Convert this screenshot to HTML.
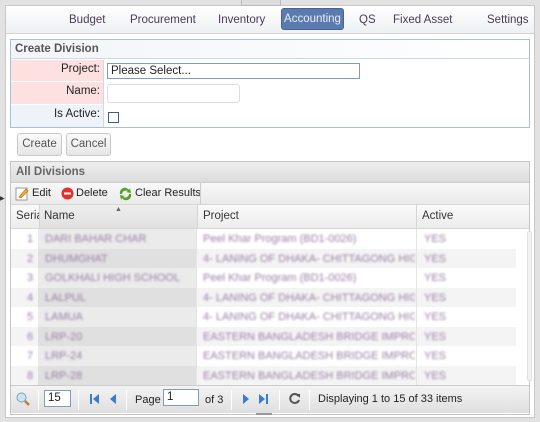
<!DOCTYPE html>
<html><head><meta charset="utf-8"><style>
*{box-sizing:border-box;margin:0;padding:0}
body{width:540px;height:422px;background:#e2e2e2;font-family:"Liberation Sans",sans-serif;font-size:11px;position:relative;overflow:hidden;color:#222}
.a{position:absolute}
.page{left:5px;top:5px;width:530px;height:413px;background:#fff;border:1px solid #c8c8c8}
.nav{left:6px;top:6px;width:528px;height:28px;background:linear-gradient(#fff,#eef0f3);border-bottom:1px solid #d0d4da}
.nav span{position:absolute;top:8px;color:#4a3a5a;font-size:11.5px}
.acc{left:281px;top:8px;width:63px;height:22px;background:#5b7ab0;border:1px solid #476396;border-radius:3px;color:#e8eef8;text-align:center;line-height:20px;font-size:11.5px}
.p1{left:10px;top:39px;width:520px;height:89px;border:1px solid #a9bfd6}
.ph{left:11px;top:40px;width:518px;height:19px;background:linear-gradient(90deg,#f2f5f9,#fff);border-bottom:1px solid #cdd8e4;font-weight:bold;color:#555;font-size:11.5px;padding:3px 4px}
.lab{left:11px;width:92px;text-align:right;padding-right:3px;font-size:11.5px;color:#222}
.btn{top:133px;height:23px;border:1px solid #c8c8c8;border-radius:3px;background:linear-gradient(#fbfbfb,#e6e6e6);color:#555;text-align:center;line-height:21px;font-size:11.5px}
.p2{left:10px;top:161px;width:520px;height:254px;border:1px solid #c5c5c5;background:#fff}
.ph2{left:11px;top:162px;width:518px;height:21px;background:linear-gradient(#eee,#dcdcdc);border-bottom:1px solid #ccc;font-weight:bold;color:#666;padding:4px 5px;font-size:11.5px}
.tb{left:11px;top:183px;width:518px;height:22px;background:linear-gradient(#f8f8f8,#eaeaea);border-bottom:1px solid #d6d6d6;font-size:11px}
.gh{left:11px;top:205px;width:518px;height:24px;background:linear-gradient(#fafafa,#ececec);border-bottom:1px solid #d8d8d8}
.gh span{position:absolute;top:5px;color:#333;font-size:11.5px}
.row{left:11px;width:505px;height:19.5px;overflow:hidden}
.row div{position:absolute;top:4px;color:#9a7ea6;font-size:11px;filter:blur(1px);white-space:nowrap;overflow:hidden}
.ft{left:11px;top:385px;width:518px;height:28px;background:linear-gradient(#f3f3f3,#dfdfdf);border-top:1px solid #ccc}
.sep{position:absolute;top:4px;width:1px;height:20px;background:#c8c8c8;border-right:1px solid #fff}
.inp{position:absolute;background:#fff;border:1px solid #7f9db9;font-size:11.5px;padding-left:3px}
.alt{background:rgba(0,0,0,.045)}
</style></head><body>
<div class="a page"></div>
<div class="a" style="left:241px;top:0;width:40px;height:6px;background:#ddd;border:1px solid #bbb;border-top:0"></div>
<div class="a nav">
<span style="left:63px">Budget</span><span style="left:124px">Procurement</span><span style="left:212px">Inventory</span>
<span style="left:353px">QS</span><span style="left:387px">Fixed Asset</span><span style="left:481px">Settings</span>
</div>
<div class="a acc">Accounting</div>
<div class="a p1"></div>
<div class="a ph">Create Division</div>
<div class="a" style="left:11px;top:60px;width:92px;height:21px;background:#fde0e0"></div>
<div class="a" style="left:11px;top:82px;width:92px;height:22px;background:#fde0e0"></div>
<div class="a" style="left:11px;top:105px;width:92px;height:22px;background:#eef3f9"></div>
<div class="a" style="left:103px;top:60px;width:1px;height:67px;background:#cfd9e4"></div>
<div class="a lab" style="top:63px">Project:</div>
<div class="a lab" style="top:85px">Name:</div>
<div class="a lab" style="top:108px">Is Active:</div>
<div class="a inp" style="left:107px;top:63px;width:253px;height:16px;line-height:14px;color:#222">Please Select...</div>
<div class="a inp" style="left:107px;top:84px;width:133px;height:19px;border-color:#ddd;border-radius:3px"></div>
<div class="a" style="left:108px;top:112px;width:11px;height:11px;border:1px solid #3d5f84;background:#fff"></div>
<div class="a btn" style="left:17px;width:45px">Create</div>
<div class="a btn" style="left:66px;width:45px">Cancel</div>
<div class="a p2"></div>
<div class="a ph2">All Divisions</div>
<div class="a tb">
<svg class="a" style="left:4px;top:3px" width="14" height="15"><rect x="1" y="2" width="11" height="12" fill="#fff" stroke="#999"/><path d="M4 11 L11 3 L13 5 L6 12 Z" fill="#f0b030" stroke="#b07010" stroke-width=".7"/></svg>
<span class="a" style="left:21px;top:4px">Edit</span>
<svg class="a" style="left:50px;top:4px" width="13" height="13"><circle cx="6.5" cy="6.5" r="6" fill="#e03030"/><rect x="3" y="5.5" width="7" height="2" fill="#fff"/></svg>
<span class="a" style="left:65px;top:4px">Delete</span>
<svg class="a" style="left:107px;top:3px" width="15" height="15"><path d="M2 8 A5 5 0 0 1 11 4 L12 2 L13 7 L8 6 L10 5 A4 4 0 0 0 4 8Z M13 8 A5 5 0 0 1 4 12 L3 14 L2 9 L7 10 L5 11 A4 4 0 0 0 11 8Z" fill="#5a9e2a"/></svg>
<span class="a" style="left:124px;top:4px">Clear Results</span>
<div class="a" style="left:189px;top:0;width:1px;height:22px;background:#ccc"></div>
</div>
<div class="a gh">
<div class="a" style="left:28px;top:0;width:158px;height:23px;background:linear-gradient(#eee,#e0e0e0)"></div>
<span style="left:5px;width:23px;overflow:hidden;white-space:nowrap">Serial</span><span style="left:33px">Name</span><span style="left:192px">Project</span><span style="left:411px">Active</span>
<div class="a" style="left:28px;top:0;width:1px;height:23px;background:#d4d4d4"></div>
<div class="a" style="left:186px;top:0;width:1px;height:23px;background:#d4d4d4"></div>
<div class="a" style="left:405px;top:0;width:1px;height:23px;background:#d4d4d4"></div>
<div class="a" style="left:104px;top:1px;font-size:7px;color:#666">▲</div>
</div>
<div class="a" style="left:38px;top:229px;width:158px;height:156px;background:#ebebeb"></div>
<div class="a row" style="top:229px"><div style="left:16px">1</div><div style="left:34px">DARI BAHAR CHAR</div><div style="left:192px;width:212px">Peel Khar Program (BD1-0026)</div><div style="left:413px">YES</div></div>
<div class="a row alt" style="top:248.5px"><div style="left:16px">2</div><div style="left:34px">DHUMGHAT</div><div style="left:192px;width:212px">4- LANING OF DHAKA- CHITTAGONG HIGHWAY</div><div style="left:413px">YES</div></div>
<div class="a row" style="top:268px"><div style="left:16px">3</div><div style="left:34px">GOLKHALI HIGH SCHOOL</div><div style="left:192px;width:212px">Peel Khar Program (BD1-0026)</div><div style="left:413px">YES</div></div>
<div class="a row alt" style="top:287.5px"><div style="left:16px">4</div><div style="left:34px">LALPUL</div><div style="left:192px;width:212px">4- LANING OF DHAKA- CHITTAGONG HIGHWAY</div><div style="left:413px">YES</div></div>
<div class="a row" style="top:307px"><div style="left:16px">5</div><div style="left:34px">LAMUA</div><div style="left:192px;width:212px">4- LANING OF DHAKA- CHITTAGONG HIGHWAY</div><div style="left:413px">YES</div></div>
<div class="a row alt" style="top:326.5px"><div style="left:16px">6</div><div style="left:34px">LRP-20</div><div style="left:192px;width:212px">EASTERN BANGLADESH BRIDGE IMPROVEMENT</div><div style="left:413px">YES</div></div>
<div class="a row" style="top:346px"><div style="left:16px">7</div><div style="left:34px">LRP-24</div><div style="left:192px;width:212px">EASTERN BANGLADESH BRIDGE IMPROVEMENT</div><div style="left:413px">YES</div></div>
<div class="a row alt" style="top:365.5px"><div style="left:16px">8</div><div style="left:34px">LRP-28</div><div style="left:192px;width:212px">EASTERN BANGLADESH BRIDGE IMPROVEMENT</div><div style="left:413px">YES</div></div>
<div class="a" style="left:196px;top:229px;width:1px;height:156px;background:#e4e4e4"></div>
<div class="a" style="left:416px;top:229px;width:1px;height:156px;background:#e4e4e4"></div>
<div class="a" style="left:527px;top:231px;width:5px;height:150px;background:#f2f2f2;border:1px solid #e0e0e0;border-radius:2px"></div>
<div class="a ft">
<svg class="a" style="left:5px;top:6px" width="14" height="14"><circle cx="5.5" cy="5.5" r="4.5" fill="#cfe3f5" stroke="#7aa0c8"/><path d="M9 9 L13 13" stroke="#c08030" stroke-width="2.5"/></svg>
<div class="sep" style="left:27px"></div>
<div class="inp" style="left:33px;top:4px;width:27px;height:17px;line-height:15px">15</div>
<div class="sep" style="left:67px"></div>
<svg class="a" style="left:78px;top:7px" width="30" height="12"><rect x="1" y="1" width="2" height="10" fill="#3a7ad0"/><path d="M10 1 L4 6 L10 11Z M27 1 L21 6 L27 11Z" fill="#3a7ad0"/></svg>
<div class="sep" style="left:115px"></div>
<span class="a" style="left:124px;top:8px">Page</span>
<div class="inp" style="left:152px;top:3px;width:36px;height:17px;line-height:15px">1</div>
<span class="a" style="left:194px;top:8px">of 3</span>
<div class="sep" style="left:220px"></div>
<svg class="a" style="left:230px;top:7px" width="30" height="12"><path d="M2 1 L8 6 L2 11Z M18 1 L24 6 L18 11Z" fill="#3a7ad0"/><rect x="25" y="1" width="2" height="10" fill="#3a7ad0"/></svg>
<div class="sep" style="left:268px"></div>
<svg class="a" style="left:277px;top:6px" width="13" height="13"><path d="M10.5 4 A4.5 4.5 0 1 0 11 8" fill="none" stroke="#555" stroke-width="2"/><path d="M8 2 L12 2 L12 6Z" fill="#555"/></svg>
<div class="sep" style="left:298px"></div>
<span class="a" style="left:307px;top:7px;color:#222">Displaying 1 to 15 of 33 items</span>
</div>
<div class="a" style="left:256px;top:413px;width:16px;height:2px;background:#999"></div>
<div class="a" style="left:0;top:195px;font-size:6px;color:#333">▶</div>
</body></html>
